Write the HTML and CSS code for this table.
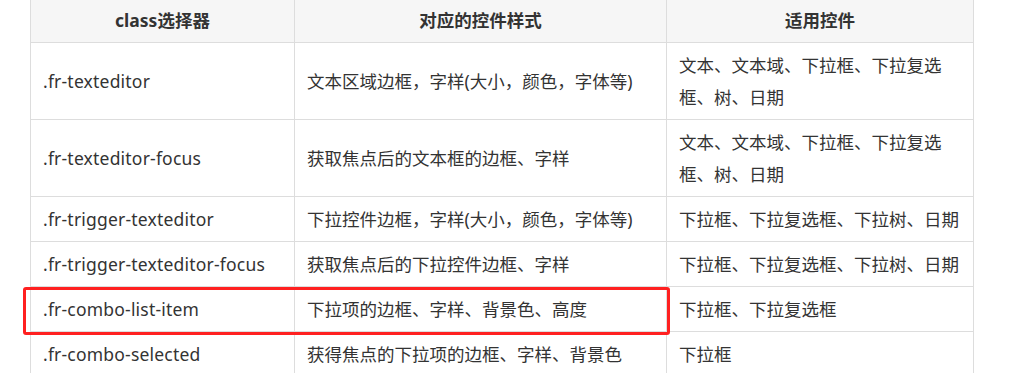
FILE: index.html
```html
<!DOCTYPE html>
<html lang="zh-CN">
<head>
  <meta charset="UTF-8" />
  <title>控件样式 class 选择器</title>
  <link rel="stylesheet" href="styles.css">
</head>
<body>
  <div class="doc-table">
    <table class="style-table">
      <colgroup>
        <col class="col-selector">
        <col class="col-style">
        <col class="col-widget">
      </colgroup>
      <thead>
        <tr>
          <th>class选择器</th>
          <th>对应的控件样式</th>
          <th>适用控件</th>
        </tr>
      </thead>
      <tbody>
        <tr>
          <td>.fr-texteditor</td>
          <td>文本区域边框，字样(大小，颜色，字体等)</td>
          <td>文本、文本域、下拉框、下拉复选框、树、日期</td>
        </tr>
        <tr>
          <td>.fr-texteditor-focus</td>
          <td>获取焦点后的文本框的边框、字样</td>
          <td>文本、文本域、下拉框、下拉复选框、树、日期</td>
        </tr>
        <tr>
          <td>.fr-trigger-texteditor</td>
          <td>下拉控件边框，字样(大小，颜色，字体等)</td>
          <td>下拉框、下拉复选框、下拉树、日期</td>
        </tr>
        <tr>
          <td>.fr-trigger-texteditor-focus</td>
          <td>获取焦点后的下拉控件边框、字样</td>
          <td>下拉框、下拉复选框、下拉树、日期</td>
        </tr>
        <tr class="marked">
          <td>.fr-combo-list-item</td>
          <td>下拉项的边框、字样、背景色、高度</td>
          <td>下拉框、下拉复选框</td>
        </tr>
        <tr>
          <td>.fr-combo-selected</td>
          <td>获得焦点的下拉项的边框、字样、背景色</td>
          <td>下拉框</td>
        </tr>
      </tbody>
    </table>
    <!-- red outline drawn over the highlighted row -->
    <div class="mark-box"></div>
  </div>
</body>
</html>
```

FILE: styles.css
```css
body {
  margin: 0;
  background-color: #fff;
  color: #333;
  font-family: "Noto Sans", "Noto Sans CJK SC", sans-serif;
  overflow: hidden;
}

.doc-table {
  position: relative;
  padding-left: 30px;
  margin-top: -3px;
}

.style-table {
  width: 943px;
  table-layout: fixed;
  border-collapse: collapse;
  font-size: 17.5px;
  line-height: 32px;
}

.col-selector {
  width: 264px;
}

.col-style {
  width: 372px;
}

.col-widget {
  width: 307px;
}

th, td {
  padding: 6px 12px;
  border: 1px solid #ddd;
  text-align: left;
  vertical-align: middle;
}

td:first-child {
  letter-spacing: 0.2px;
}

th {
  background-color: #f6f6f6;
  font-weight: bold;
  text-align: center;
}

.mark-box {
  position: absolute;
  left: 23px;
  top: 290px;
  width: 641px;
  height: 42px;
  border: 3px solid #ff2020;
  border-radius: 3px;
}
```
